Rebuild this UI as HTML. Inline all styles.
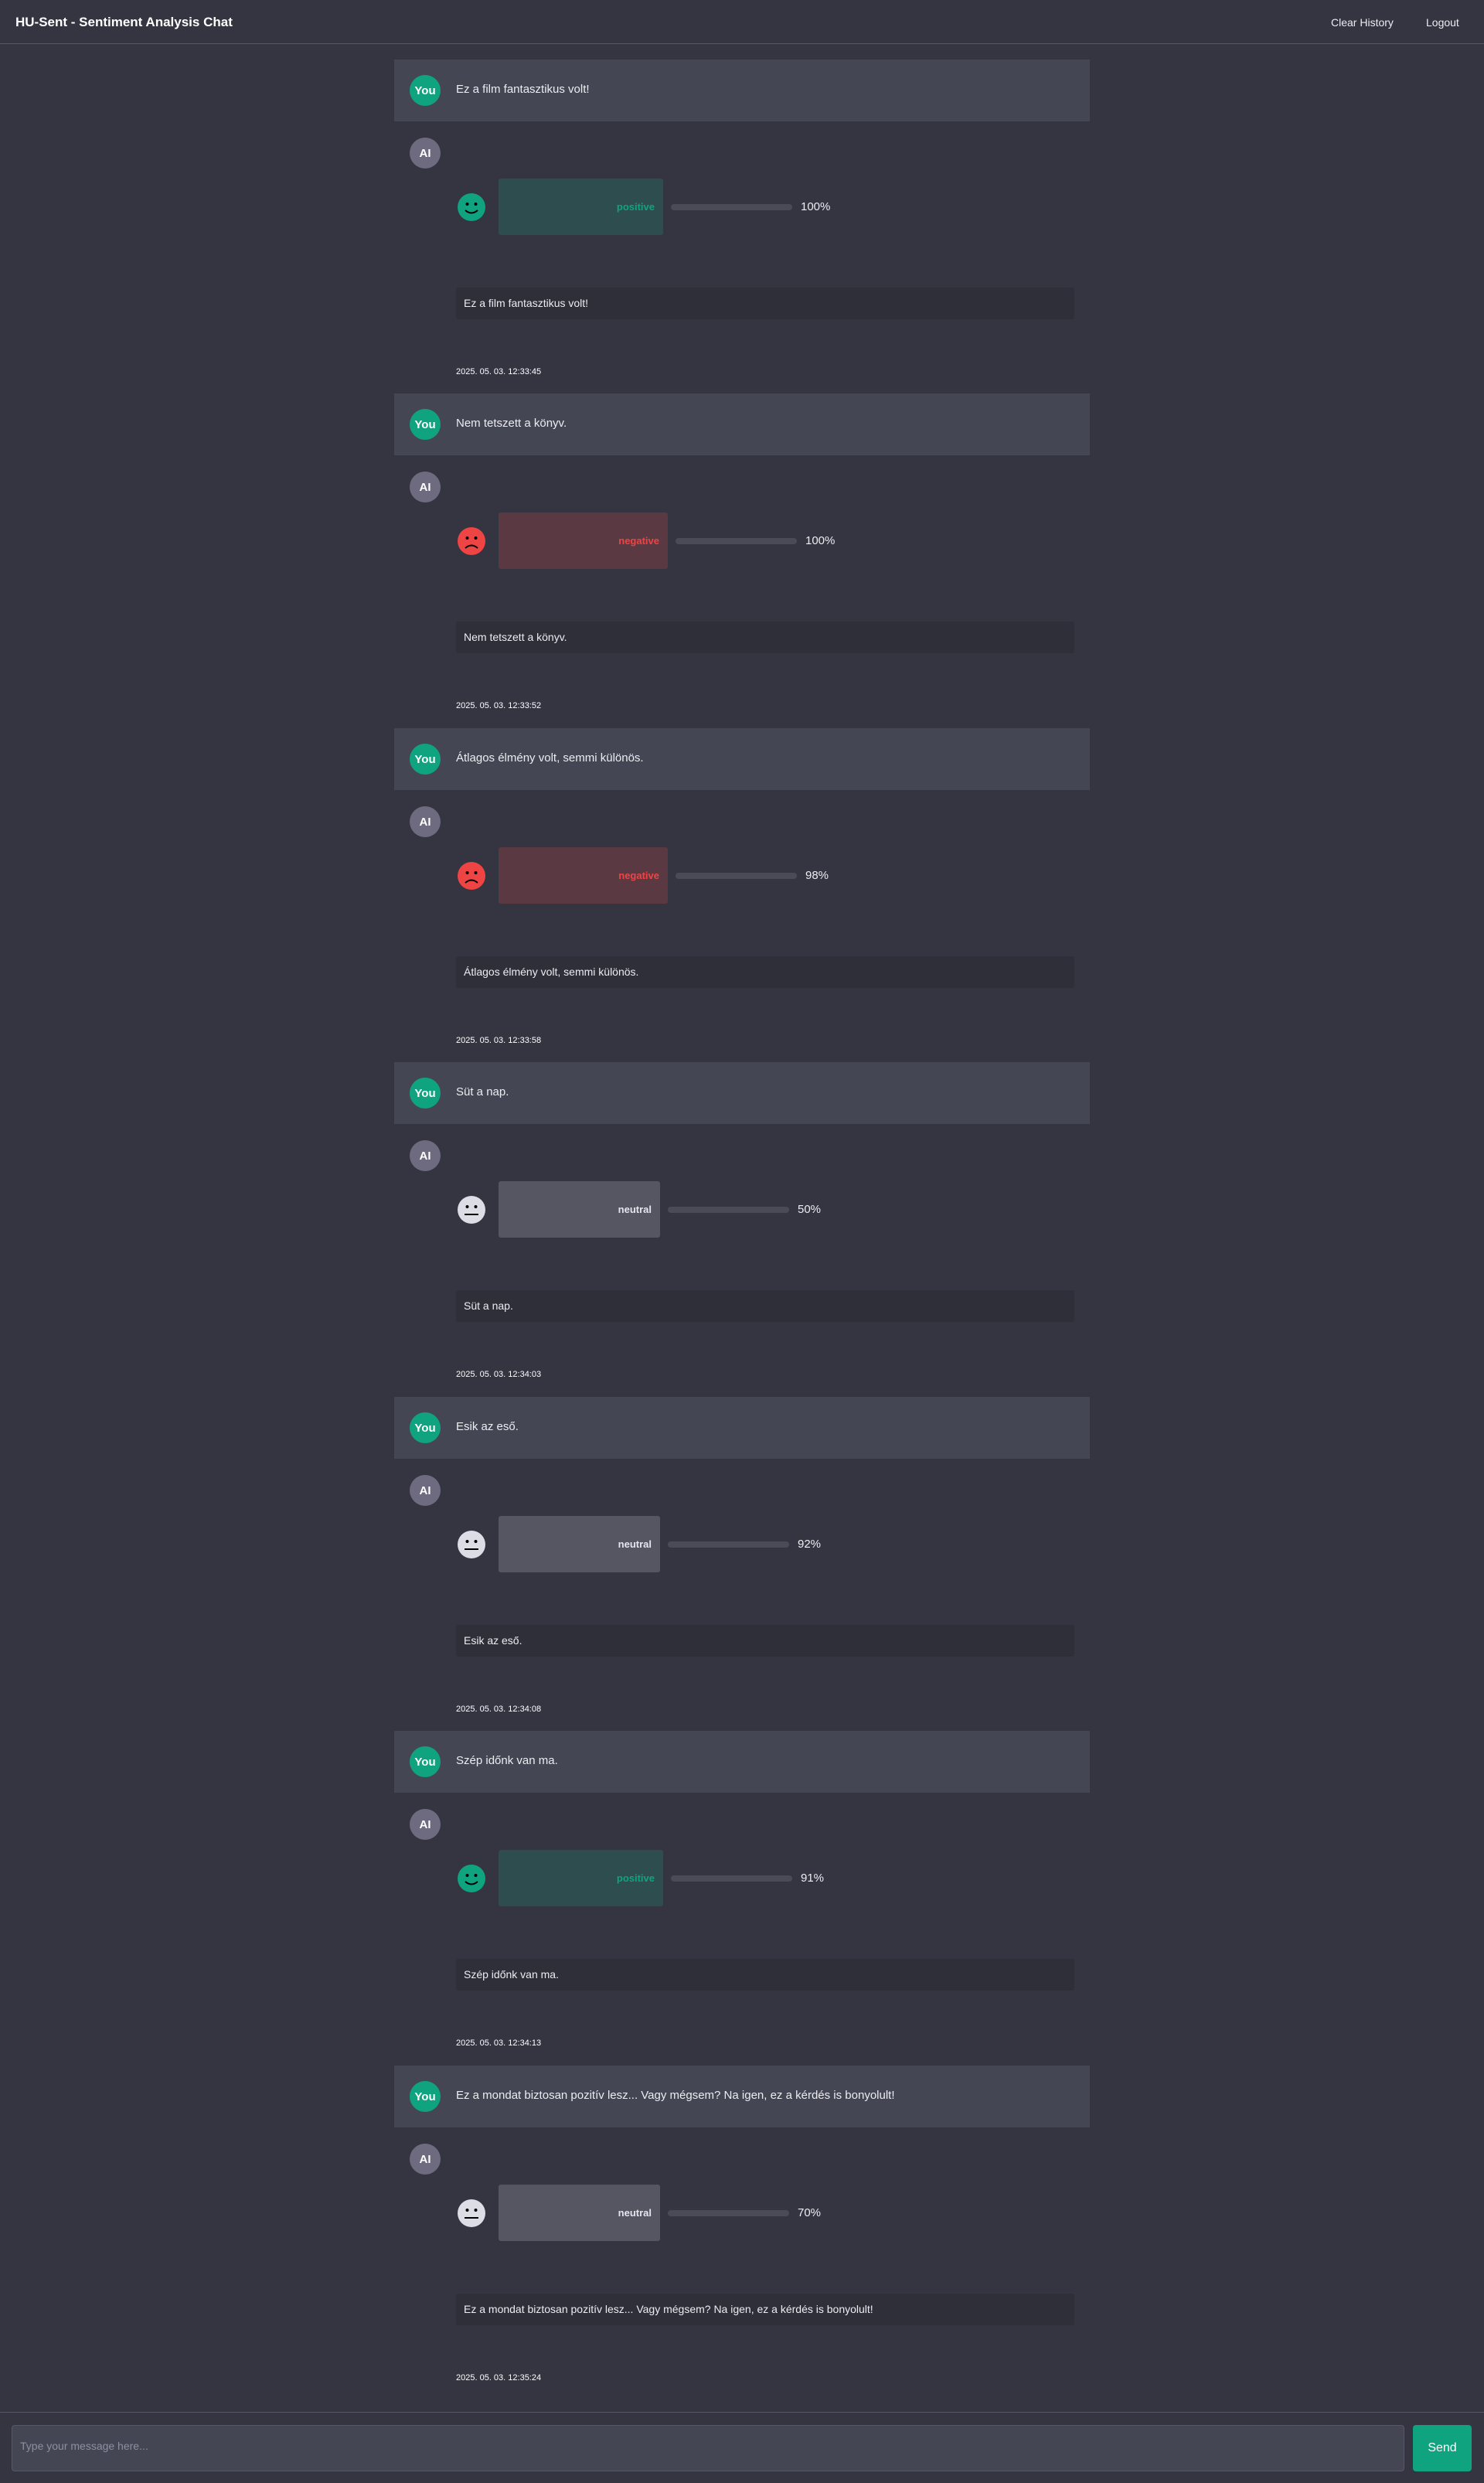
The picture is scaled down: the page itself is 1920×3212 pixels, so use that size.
<!DOCTYPE html>
<html><head><meta charset="utf-8"><style>
*{box-sizing:border-box;margin:0;padding:0}
body{width:1920px;height:3212px;background:#343541;font-family:"Liberation Sans",Arial,sans-serif;color:#ececf1;position:relative;overflow:hidden}
.hdr{height:57px;border-bottom:1px solid #565869;position:relative}
.hdr .t{position:absolute;left:20px;top:19px;font-size:17px;font-weight:bold;color:#fff}
.hdr .l{position:absolute;top:21px;font-size:14px;color:#ececf1}
.blk{position:absolute;left:510px;width:900px;height:433px}
.user{height:80px;background:#444654;position:relative}
.av{position:absolute;width:40px;height:40px;border-radius:50%;color:#fff;font-weight:bold;font-size:15px;display:flex;align-items:center;justify-content:center}
.user .av{left:20px;top:20px;background:#10a37f}
.user .tx{position:absolute;left:80px;top:30px;font-size:15px;color:#ececf1}
.ai{position:absolute;left:20px;top:101px;background:#6e6b80}
.row{position:absolute;left:82px;top:154px;height:73px;display:flex;align-items:center}
.emo{width:36px;height:36px;margin-right:17px}
.box{height:73px;border-radius:3px;display:flex;align-items:center;justify-content:flex-end;padding-right:11px;font-size:13px;font-weight:bold}
.pos{background:#2d4d4f;color:#10a37f;width:213px}
.neg{background:#5a3942;color:#ef4444;width:219px}
.neu{background:#565663;color:#e5e5ee;width:209px}
.bar{width:157px;height:8px;border-radius:4px;background:#4b4b58;margin-left:10px}
.pct{margin-left:11px;font-size:15px;color:#ececf1}
.echo{position:absolute;left:80px;top:295px;width:800px;height:41px;background:#2f2f3a;border-radius:3px;font-size:14px;padding:12px 10px;color:#ececf1}
.ts{position:absolute;left:80px;top:398px;font-size:11px;color:#fff}
.ftr{position:absolute;left:0;top:3120px;width:1920px;height:92px;border-top:1px solid #565869}
.inp{position:absolute;left:15px;top:16px;width:1802px;height:60px;background:#444654;border:1px solid #565869;border-radius:4px;font-size:14px;color:#8e8ea0;padding:18px 10px}
.send{position:absolute;left:1828px;top:16px;width:76px;height:60px;background:#10a37f;border-radius:4px;color:#fff;font-size:16px;display:flex;align-items:center;justify-content:center}
</style></head><body>
<div class="hdr"><div class="t">HU-Sent - Sentiment Analysis Chat</div><div class="l" style="left:1722px">Clear History</div><div class="l" style="left:1845px">Logout</div></div>

<svg width="0" height="0" style="position:absolute">
</svg>

<!-- blocks -->
<div class="blk" style="top:77px"><div class="user"><div class="av">You</div><div class="tx">Ez a film fantasztikus volt!</div></div><div class="av ai">AI</div>
<div class="row"><svg class="emo" viewBox="0 0 36 36"><circle cx="18" cy="18" r="18" fill="#10a37f"/><circle cx="12.5" cy="14" r="2" fill="#000"/><circle cx="23.5" cy="14" r="2" fill="#000"/><path d="M10 22 Q18 29 26 22" stroke="#000" stroke-width="2" fill="none"/></svg><div class="box pos">positive</div><div class="bar"></div><div class="pct">100%</div></div>
<div class="echo">Ez a film fantasztikus volt!</div><div class="ts">2025. 05. 03. 12:33:45</div></div>

<div class="blk" style="top:509px"><div class="user"><div class="av">You</div><div class="tx">Nem tetszett a könyv.</div></div><div class="av ai">AI</div>
<div class="row"><svg class="emo" viewBox="0 0 36 36"><circle cx="18" cy="18" r="18" fill="#ef4444"/><circle cx="12.5" cy="14" r="2" fill="#000"/><circle cx="23.5" cy="14" r="2" fill="#000"/><path d="M10 27 Q18 20 26 27" stroke="#000" stroke-width="2" fill="none"/></svg><div class="box neg">negative</div><div class="bar"></div><div class="pct">100%</div></div>
<div class="echo">Nem tetszett a könyv.</div><div class="ts">2025. 05. 03. 12:33:52</div></div>

<div class="blk" style="top:942px"><div class="user"><div class="av">You</div><div class="tx">Átlagos élmény volt, semmi különös.</div></div><div class="av ai">AI</div>
<div class="row"><svg class="emo" viewBox="0 0 36 36"><circle cx="18" cy="18" r="18" fill="#ef4444"/><circle cx="12.5" cy="14" r="2" fill="#000"/><circle cx="23.5" cy="14" r="2" fill="#000"/><path d="M10 27 Q18 20 26 27" stroke="#000" stroke-width="2" fill="none"/></svg><div class="box neg">negative</div><div class="bar"></div><div class="pct">98%</div></div>
<div class="echo">Átlagos élmény volt, semmi különös.</div><div class="ts">2025. 05. 03. 12:33:58</div></div>

<div class="blk" style="top:1374px"><div class="user"><div class="av">You</div><div class="tx">Süt a nap.</div></div><div class="av ai">AI</div>
<div class="row"><svg class="emo" viewBox="0 0 36 36"><circle cx="18" cy="18" r="18" fill="#dddde6"/><circle cx="12.5" cy="14" r="2" fill="#000"/><circle cx="23.5" cy="14" r="2" fill="#000"/><path d="M9 24 H27" stroke="#000" stroke-width="2"/></svg><div class="box neu">neutral</div><div class="bar"></div><div class="pct">50%</div></div>
<div class="echo">Süt a nap.</div><div class="ts">2025. 05. 03. 12:34:03</div></div>

<div class="blk" style="top:1807px"><div class="user"><div class="av">You</div><div class="tx">Esik az eső.</div></div><div class="av ai">AI</div>
<div class="row"><svg class="emo" viewBox="0 0 36 36"><circle cx="18" cy="18" r="18" fill="#dddde6"/><circle cx="12.5" cy="14" r="2" fill="#000"/><circle cx="23.5" cy="14" r="2" fill="#000"/><path d="M9 24 H27" stroke="#000" stroke-width="2"/></svg><div class="box neu">neutral</div><div class="bar"></div><div class="pct">92%</div></div>
<div class="echo">Esik az eső.</div><div class="ts">2025. 05. 03. 12:34:08</div></div>

<div class="blk" style="top:2239px"><div class="user"><div class="av">You</div><div class="tx">Szép időnk van ma.</div></div><div class="av ai">AI</div>
<div class="row"><svg class="emo" viewBox="0 0 36 36"><circle cx="18" cy="18" r="18" fill="#10a37f"/><circle cx="12.5" cy="14" r="2" fill="#000"/><circle cx="23.5" cy="14" r="2" fill="#000"/><path d="M10 22 Q18 29 26 22" stroke="#000" stroke-width="2" fill="none"/></svg><div class="box pos">positive</div><div class="bar"></div><div class="pct">91%</div></div>
<div class="echo">Szép időnk van ma.</div><div class="ts">2025. 05. 03. 12:34:13</div></div>

<div class="blk" style="top:2672px"><div class="user"><div class="av">You</div><div class="tx">Ez a mondat biztosan pozitív lesz... Vagy mégsem? Na igen, ez a kérdés is bonyolult!</div></div><div class="av ai">AI</div>
<div class="row"><svg class="emo" viewBox="0 0 36 36"><circle cx="18" cy="18" r="18" fill="#dddde6"/><circle cx="12.5" cy="14" r="2" fill="#000"/><circle cx="23.5" cy="14" r="2" fill="#000"/><path d="M9 24 H27" stroke="#000" stroke-width="2"/></svg><div class="box neu">neutral</div><div class="bar"></div><div class="pct">70%</div></div>
<div class="echo">Ez a mondat biztosan pozitív lesz... Vagy mégsem? Na igen, ez a kérdés is bonyolult!</div><div class="ts">2025. 05. 03. 12:35:24</div></div>

<div class="ftr"><div class="inp">Type your message here...</div><div class="send">Send</div></div>
</body></html>
